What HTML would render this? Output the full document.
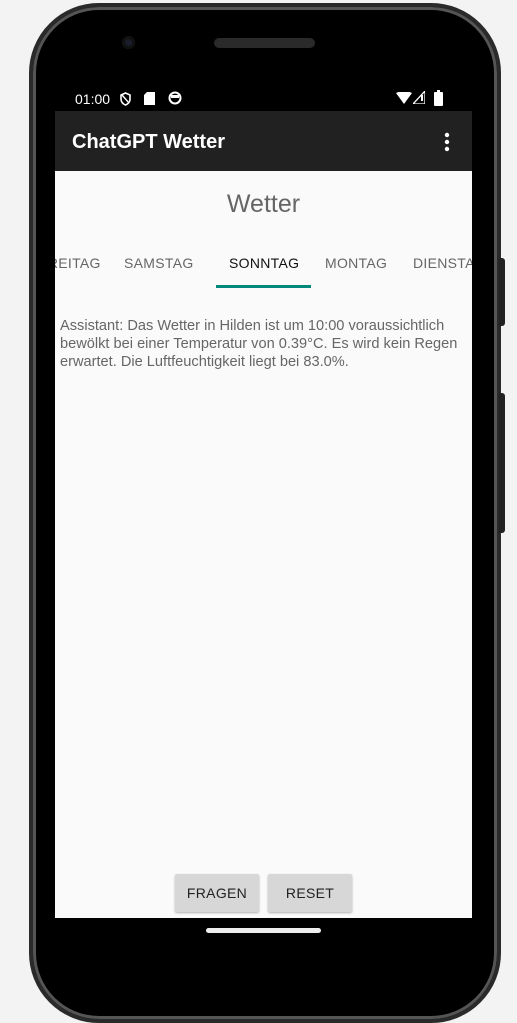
<!DOCTYPE html>
<html><head><meta charset="utf-8"><style>
*{margin:0;padding:0;box-sizing:border-box}
body{width:517px;height:1023px;background:#f3f3f3;position:relative;overflow:hidden;font-family:"Liberation Sans",sans-serif}
.phone{position:absolute;left:29px;top:3px;width:472px;height:1020px;background:#000;border-radius:70px;border:4px solid #2a2a2a;box-shadow:inset 0 0 0 3px #555}
.btn1{position:absolute;left:499px;top:258px;width:6px;height:68px;background:#222;border-radius:0 3px 3px 0}
.btn2{position:absolute;left:499px;top:393px;width:6px;height:140px;background:#222;border-radius:0 3px 3px 0}
.cam{position:absolute;left:122px;top:36px;width:13px;height:13px;border-radius:50%;background:#1a1c2c;box-shadow:inset 0 0 0 3px #111}
.spk{position:absolute;left:214px;top:38px;width:101px;height:10px;border-radius:5px;background:#2a2a2a}
.status{position:absolute;left:55px;top:85px;width:417px;height:26px;background:#000;color:#fff;font-size:14px}
.app{position:absolute;left:55px;top:111px;width:417px;height:60px;background:#212121;color:#fff}
.screen{position:absolute;left:55px;top:171px;width:417px;height:747px;background:#fafafa;overflow:hidden}
.tab{position:absolute;top:84px;font-size:14px;color:#666;letter-spacing:.3px}
.b{position:absolute;top:703px;height:38px;background:#d7d7d7;border-radius:2px;box-shadow:0 1px 2px rgba(0,0,0,.3);font-size:14px;color:#222;text-align:center;line-height:38px;letter-spacing:.3px}
</style></head><body>
<div class="phone"></div>
<div class="btn1"></div><div class="btn2"></div>
<div class="cam"></div><div class="spk"></div>
<div class="status">
<span style="position:absolute;left:20px;top:6px">01:00</span>
<svg style="position:absolute;left:64px;top:7px" width="13" height="14" viewBox="0 0 13 14"><path d="M6.5 1L2 3v4c0 3 2 5 4.5 6 2.5-1 4.5-3 4.5-6V3z" fill="none" stroke="#fff" stroke-width="1.6"/><path d="M3 3l7 8" stroke="#fff" stroke-width="1.4"/></svg>
<svg style="position:absolute;left:89px;top:7px" width="11" height="13"><path d="M3 0h8v13H0V3z" fill="#fff"/></svg>
<svg style="position:absolute;left:113px;top:6px" width="14" height="14"><circle cx="7" cy="7" r="5.5" fill="none" stroke="#fff" stroke-width="2"/><rect x="3" y="4" width="8" height="3" fill="#fff"/></svg>
<svg style="position:absolute;left:341px;top:7px" width="16" height="12"><path d="M0 1Q8-3 16 1L8 12z" fill="#fff"/></svg>
<svg style="position:absolute;left:358px;top:6px" width="12" height="13"><path d="M12 0V13H0z" fill="none" stroke="#fff" stroke-width="1.3"/><rect x="8" y="4" width="2" height="6" fill="#fff"/></svg>
<svg style="position:absolute;left:379px;top:5px" width="9" height="16"><rect x="0" y="2" width="9" height="14" rx="1" fill="#fff"/><rect x="3" y="0" width="3" height="2" fill="#fff"/></svg>
</div>
<div class="app">
<span style="position:absolute;left:17px;top:20px;font-size:20px;font-weight:bold">ChatGPT Wetter</span>
<svg style="position:absolute;left:389px;top:21px" width="6" height="20"><circle cx="3" cy="3" r="2.2" fill="#fff"/><circle cx="3" cy="10" r="2.2" fill="#fff"/><circle cx="3" cy="17" r="2.2" fill="#fff"/></svg>
</div>
<div class="screen">
<div style="position:absolute;left:0;width:417px;top:19px;text-align:center;font-size:25px;color:#666">Wetter</div>
<span class="tab" style="left:-16px">FREITAG</span>
<span class="tab" style="left:69px">SAMSTAG</span>
<span class="tab" style="left:174px;color:#111">SONNTAG</span>
<span class="tab" style="left:270px">MONTAG</span>
<span class="tab" style="left:358px;white-space:nowrap">DIENSTAG</span>
<div style="position:absolute;left:161px;top:114px;width:95px;height:3px;background:#00897b"></div>
<div style="position:absolute;left:5px;top:146px;width:412px;font-size:14.6px;line-height:18px;color:#666">Assistant: Das Wetter in Hilden ist um 10:00 voraussichtlich bewölkt bei einer Temperatur von 0.39°C. Es wird kein Regen erwartet. Die Luftfeuchtigkeit liegt bei 83.0%.</div>
<div class="b" style="left:120px;width:84px">FRAGEN</div>
<div class="b" style="left:213px;width:84px">RESET</div>
</div>
<div style="position:absolute;left:206px;top:928px;width:115px;height:5px;border-radius:3px;background:#eee"></div>
</body></html>
